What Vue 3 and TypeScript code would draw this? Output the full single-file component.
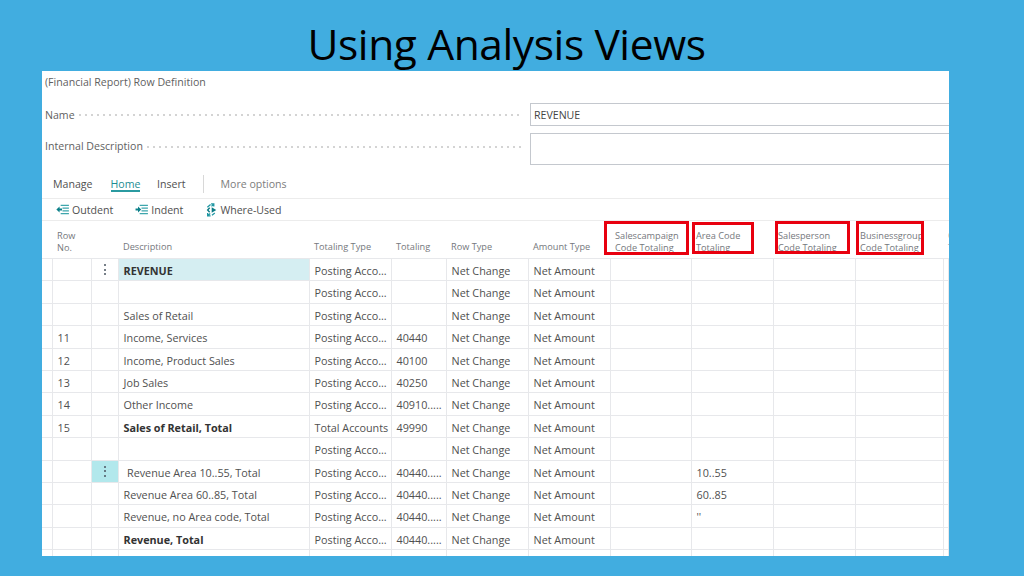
<script setup lang="ts">
interface Row {
  no: string
  desc: string
  type: string
  totaling: string
  rowType: string
  amount: string
  area: string
  bold?: boolean
  kebab?: boolean
  kebabActive?: boolean
  selected?: boolean
  indent?: boolean
}

const P = 'Posting Acco...'
const N = 'Net Change'
const A = 'Net Amount'

const rows: Row[] = [
  { no: '', desc: 'REVENUE', type: P, totaling: '', rowType: N, amount: A, area: '', bold: true, kebab: true, selected: true },
  { no: '', desc: '', type: P, totaling: '', rowType: N, amount: A, area: '' },
  { no: '', desc: 'Sales of Retail', type: P, totaling: '', rowType: N, amount: A, area: '' },
  { no: '11', desc: 'Income, Services', type: P, totaling: '40440', rowType: N, amount: A, area: '' },
  { no: '12', desc: 'Income, Product Sales', type: P, totaling: '40100', rowType: N, amount: A, area: '' },
  { no: '13', desc: 'Job Sales', type: P, totaling: '40250', rowType: N, amount: A, area: '' },
  { no: '14', desc: 'Other Income', type: P, totaling: '40910.....', rowType: N, amount: A, area: '' },
  { no: '15', desc: 'Sales of Retail, Total', type: 'Total Accounts', totaling: '49990', rowType: N, amount: A, area: '', bold: true },
  { no: '', desc: '', type: P, totaling: '', rowType: N, amount: A, area: '' },
  { no: '', desc: 'Revenue Area 10..55, Total', type: P, totaling: '40440.....', rowType: N, amount: A, area: '10..55', kebab: true, kebabActive: true, indent: true },
  { no: '', desc: 'Revenue Area 60..85, Total', type: P, totaling: '40440.....', rowType: N, amount: A, area: '60..85' },
  { no: '', desc: 'Revenue, no Area code, Total', type: P, totaling: '40440.....', rowType: N, amount: A, area: "''" },
  { no: '', desc: 'Revenue, Total', type: P, totaling: '40440.....', rowType: N, amount: A, area: '', bold: true },
  { no: '', desc: '', type: '', totaling: '', rowType: '', amount: '', area: '' },
]
</script>

<template>
  <main class="slide">
    <h1 class="title">Using Analysis Views</h1>
    <section class="panel">
      <div class="caption">(Financial Report) Row Definition</div>
      <div class="fields">
        <div class="field name-field">
          <span class="label">Name</span><span class="dots"></span>
          <div class="input">REVENUE</div>
        </div>
        <div class="field desc-field">
          <span class="label">Internal Description</span><span class="dots"></span>
          <div class="input"></div>
        </div>
      </div>
      <nav class="tabs">
        <span class="tab">Manage</span>
        <span class="tab active">Home</span>
        <span class="tab">Insert</span>
        <span class="sep"></span>
        <span class="tab muted">More options</span>
      </nav>
      <div class="actions">
        <span class="action a1">
          <svg class="ico" viewBox="0 0 14 12" width="13" height="11">
            <path d="M5 1.5h9M7 4.5h7M7 7.5h7M5 10.5h9" stroke="#3ea6ad" stroke-width="1.1" fill="none" />
            <path d="M0.3 6L3.8 2.8V5H6.5V7H3.8V9.2Z" fill="#0b8089" />
          </svg>
          Outdent
        </span>
        <span class="action a2">
          <svg class="ico" viewBox="0 0 14 12" width="13" height="11">
            <path d="M5 1.5h9M7 4.5h7M7 7.5h7M5 10.5h9" stroke="#3ea6ad" stroke-width="1.1" fill="none" />
            <path d="M6.7 6L3.2 2.8V5H0.5V7H3.2V9.2Z" fill="#0b8089" />
          </svg>
          Indent
        </span>
        <span class="action a3">
          <svg class="ico" viewBox="0 0 12 15" width="11" height="14">
            <path d="M1.5 4.5L5 1.5M5.5 0.8H8.5V3.8M8.2 1.2L6 3.5" stroke="#1f97a3" stroke-width="1.4" fill="none" />
            <path d="M6.2 4.6L11.2 7.5L6.2 10.4Z" fill="#0b7a84" />
            <path d="M4 5L1.8 7.5L4 10" stroke="#0b7a84" stroke-width="1.5" fill="none" />
            <path d="M1.8 10.8V14H5M2.2 13.6L4.6 11.4M6.5 13.2L9.6 10.8" stroke="#1f97a3" stroke-width="1.4" fill="none" />
          </svg>
          Where-Used
        </span>
      </div>
      <div class="table">
        <div class="row head">
          <div class="cell"></div>
          <div class="cell hcell two"><span>Row<br />No.</span></div>
          <div class="cell"></div>
          <div class="cell hcell"><span>Description</span></div>
          <div class="cell hcell"><span>Totaling Type</span></div>
          <div class="cell hcell"><span>Totaling</span></div>
          <div class="cell hcell"><span>Row Type</span></div>
          <div class="cell hcell"><span>Amount Type</span></div>
          <div class="cell hcell two"><span>Salescampaign<br />Code Totaling</span></div>
          <div class="cell hcell two"><span>Area Code<br />Totaling</span></div>
          <div class="cell hcell two"><span>Salesperson<br />Code Totaling</span></div>
          <div class="cell hcell two"><span>Businessgroup<br />Code Totaling</span></div>
          <div class="cell hcell two"><span class="peek">C<br />T</span></div>
          <i class="mark m1"></i>
          <i class="mark m2"></i>
          <i class="mark m3"></i>
          <i class="mark m4"></i>
        </div>
        <div v-for="(r, i) in rows" :key="i" class="row body-row">
          <div class="cell"></div>
          <div class="cell txt">{{ r.no }}</div>
          <div class="cell kebab" :class="{ on: r.kebabActive }">
            <span v-if="r.kebab" class="dots3"><b></b><b></b><b></b></span>
          </div>
          <div class="cell txt" :class="{ bold: r.bold, sel: r.selected, indent: r.indent }">{{ r.desc }}</div>
          <div class="cell txt">{{ r.type }}</div>
          <div class="cell txt">{{ r.totaling }}</div>
          <div class="cell txt">{{ r.rowType }}</div>
          <div class="cell txt">{{ r.amount }}</div>
          <div class="cell"></div>
          <div class="cell txt">{{ r.area }}</div>
          <div class="cell"></div>
          <div class="cell"></div>
          <div class="cell"></div>
        </div>
      </div>
    </section>
  </main>
</template>

<style>
html,
body {
  margin: 0;
  background: #41ade0;
}
</style>

<style scoped>
.slide {
  width: 1024px;
  height: 576px;
  overflow: hidden;
  background: #41ade0;
  font-family: "Open Sans", "Noto Sans", sans-serif;
}
.title {
  margin: 0;
  height: 71px;
  box-sizing: border-box;
  padding-right: 11px;
  font-size: 42.5px;
  font-weight: 400;
  line-height: 87px;
  letter-spacing: -0.4px;
  color: #000;
  text-align: center;
  white-space: nowrap;
}
.panel {
  width: 907px;
  height: 485px;
  margin-left: 42px;
  background: #fff;
  overflow: hidden;
  color: #505050;
  font-size: 10.6px;
}
.caption {
  height: 23px;
  padding: 0 3px;
  line-height: 23px;
  color: #5f5f5f;
}
.fields {
  box-sizing: border-box;
  height: 79px;
  padding-top: 9px;
}
.field {
  display: flex;
  align-items: flex-start;
  padding-left: 3px;
}
.name-field {
  height: 23px;
  margin-bottom: 7px;
}
.desc-field {
  height: 32px;
}
.label {
  color: #5f5f5f;
  line-height: 25px;
  margin-right: 4px;
  white-space: nowrap;
}
.desc-field .label {
  line-height: 27px;
}
.dots {
  flex: 1;
  height: 2px;
  margin: 11px 9px 0 0;
  background: radial-gradient(circle at 1px 1px, #d2d2d2 0.7px, transparent 0.9px) 0 0 / 6px 2px repeat-x;
}
.desc-field .dots {
  margin-top: 13px;
}
.input {
  flex: none;
  width: 431px;
  height: 100%;
  box-sizing: border-box;
  margin-right: -12px;
  padding-left: 3px;
  border: 1px solid #c4c8ce;
  line-height: 23px;
  color: #444;
}
.tabs {
  display: flex;
  align-items: flex-start;
  gap: 17px;
  box-sizing: border-box;
  height: 26px;
  padding: 3px 0 0 11px;
  border-bottom: 1px solid #ececec;
  font-size: 10.6px;
}
.tab {
  height: 14px;
  line-height: 16px;
  border-bottom: 2px solid transparent;
  white-space: nowrap;
}
.tab.active {
  margin: 0 -0.5px 0 1px;
  color: #1c8c93;
  border-bottom-color: #2a9aa0;
}
.tab.muted {
  color: #7d7d7d;
}
.sep {
  width: 1px;
  height: 18px;
  margin-top: -1px;
  background: #d8d8d8;
}
.actions {
  display: flex;
  align-items: center;
  box-sizing: border-box;
  height: 22px;
  padding-left: 14px;
  border-bottom: 1px solid #ececec;
  font-size: 10.6px;
}
.action {
  display: flex;
  align-items: center;
  gap: 3px;
  white-space: nowrap;
}
.a2 {
  margin-left: 22px;
}
.a3 {
  margin-left: 23px;
}
.ico {
  flex: none;
}
.row {
  display: grid;
  grid-template-columns: 11px 39px 27px 191px 82px 55px 82px 82px 81px 82px 82px 88px 5px;
  box-sizing: border-box;
  height: 22.4px;
  border-bottom: 1px solid #e7e8eb;
}
.head {
  position: relative;
  height: 38px;
}
.cell {
  box-sizing: border-box;
  min-width: 0;
  overflow: hidden;
}
.body-row .cell {
  border-right: 1px solid #e7e8eb;
}
.hcell {
  display: flex;
  align-items: flex-end;
  padding: 0 0 5px 4px;
  color: #75787d;
  font-size: 9.2px;
  line-height: 12px;
  white-space: nowrap;
}
.hcell.two {
  padding-bottom: 4px;
}
.peek {
  color: #a8abb0;
}
.mark {
  position: absolute;
  box-sizing: border-box;
  border: 3px solid #e8000f;
}
.m1 {
  left: 562px;
  top: 0;
  width: 85px;
  height: 34px;
}
.m2 {
  left: 650px;
  top: 1px;
  width: 62px;
  height: 32px;
}
.m3 {
  left: 733px;
  top: 0;
  width: 75px;
  height: 33px;
}
.m4 {
  left: 814px;
  top: 0;
  width: 68px;
  height: 34px;
}
.txt {
  padding-left: 4.5px;
  line-height: 23px;
  white-space: nowrap;
  font-size: 10.8px;
}
.bold {
  font-weight: 700;
  color: #333;
}
.sel {
  background: #d5eef2;
}
.indent {
  padding-left: 8px;
}
.kebab {
  display: flex;
  align-items: center;
  justify-content: center;
}
.kebab.on {
  background: #b2e8ec;
}
.dots3 {
  display: flex;
  flex-direction: column;
  gap: 2.5px;
}
.dots3 b {
  display: block;
  width: 2px;
  height: 2px;
  border-radius: 50%;
  background: #4a5560;
}
</style>
